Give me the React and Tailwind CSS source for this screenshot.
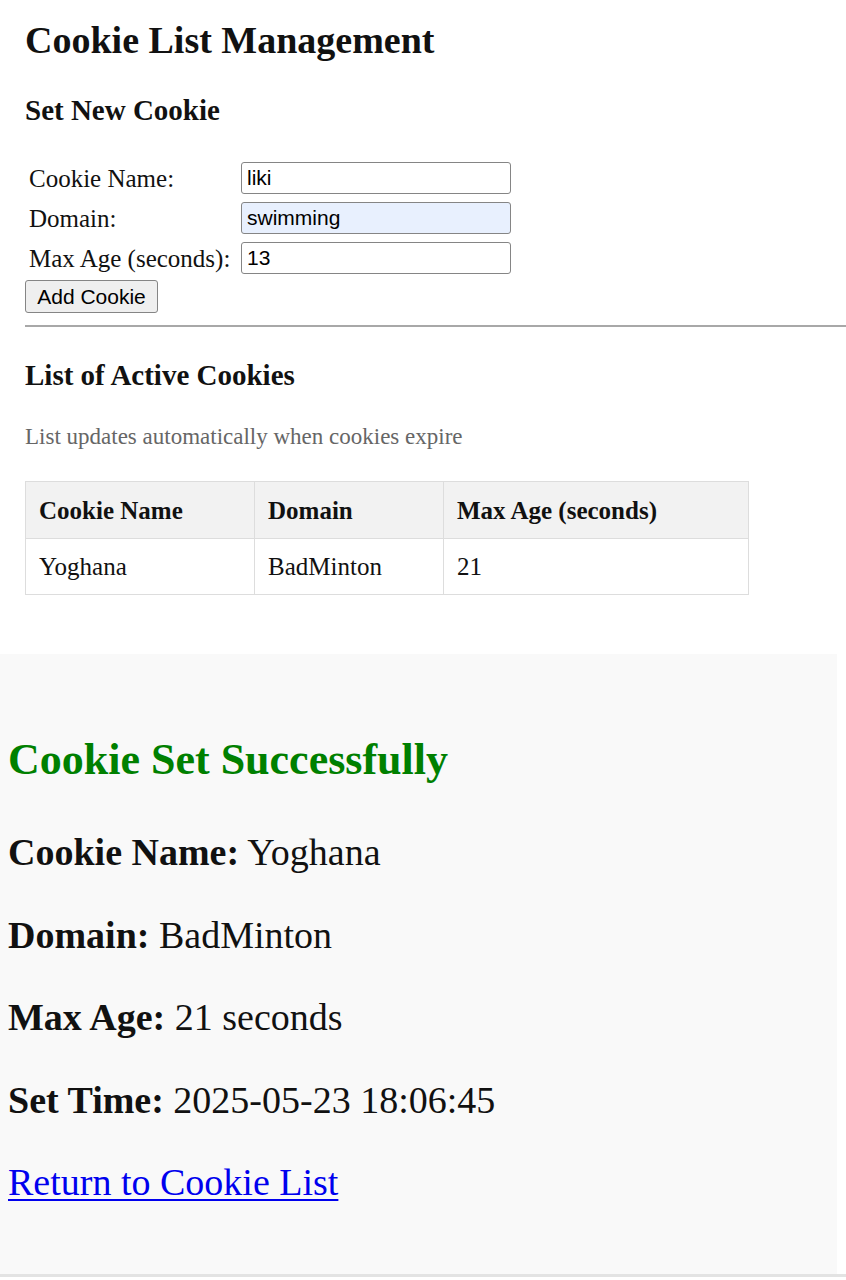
import React, { useState } from "react";

const fields = [
  { label: "Cookie Name:", name: "name", value: "liki" },
  { label: "Domain:", name: "domain", value: "swimming", autofilled: true },
  { label: "Max Age (seconds):", name: "maxAge", value: "13" },
];

const cookies = [{ name: "Yoghana", domain: "BadMinton", maxAge: 21 }];

function CookieForm() {
  const [values, setValues] = useState({ name: "liki", domain: "swimming", maxAge: "13" });

  return (
    <form onSubmit={(e) => e.preventDefault()}>
      <div className="mt-[31px] flex flex-col">
        {fields.map((f) => (
          <div key={f.name} className="flex h-[40px] items-center">
            <label className="w-[216px] pl-[4px] text-[25px] leading-[29px]">{f.label}</label>
            <input
              className={
                "h-[32px] w-[270px] rounded-[3px] border border-[#858585] px-[5px] font-['Liberation_Sans',Arial,sans-serif] text-[21px] text-black outline-none " +
                (f.autofilled ? "bg-[#e8f0fe]" : "bg-white")
              }
              name={f.name}
              value={values[f.name]}
              onChange={(e) => setValues({ ...values, [f.name]: e.target.value })}
            />
          </div>
        ))}
      </div>
      <button
        className="mt-[2px] h-[33px] w-[133px] rounded-[3px] border border-[#858585] bg-[#efefef] font-['Liberation_Sans',Arial,sans-serif] text-[21px] leading-none text-black"
        type="submit"
      >
        Add Cookie
      </button>
    </form>
  );
}

function CookieTable() {
  return (
    <table className="mt-[31px] w-[723px] table-fixed border-collapse text-[25px] leading-[29px]">
      <colgroup>
        <col className="w-[229px]" />
        <col className="w-[189px]" />
        <col className="w-[305px]" />
      </colgroup>
      <thead>
        <tr className="h-[57px] bg-[#f2f2f2]">
          <th className="border border-[#dddddd] px-[13px] text-left font-bold">Cookie Name</th>
          <th className="border border-[#dddddd] px-[13px] text-left font-bold">Domain</th>
          <th className="border border-[#dddddd] px-[13px] text-left font-bold">Max Age (seconds)</th>
        </tr>
      </thead>
      <tbody>
        {cookies.map((c) => (
          <tr key={c.name} className="h-[56px]">
            <td className="border border-[#dddddd] px-[13px]">{c.name}</td>
            <td className="border border-[#dddddd] px-[13px]">{c.domain}</td>
            <td className="border border-[#dddddd] px-[13px]">{c.maxAge}</td>
          </tr>
        ))}
      </tbody>
    </table>
  );
}

function SuccessPanel() {
  const rows = [
    ["Cookie Name:", "Yoghana"],
    ["Domain:", "BadMinton"],
    ["Max Age:", "21 seconds"],
    ["Set Time:", "2025-05-23 18:06:45"],
  ];

  return (
    <div className="h-[620px] w-[837px] bg-[#f9f9f9] pt-[81px] pl-[8px]">
      <h2 className="text-[44px] leading-[50px] font-bold text-[#008000]">Cookie Set Successfully</h2>
      <div className="mt-[45px] flex flex-col gap-[38.5px] text-[38px] leading-[44px]">
        {rows.map(([k, v]) => (
          <p key={k}>
            <strong className="font-bold">{k}</strong> {v}
          </p>
        ))}
        <p>
          <a href="#" className="text-[#0000ee] underline decoration-[2px] underline-offset-[4px]">
            Return to Cookie List
          </a>
        </p>
      </div>
    </div>
  );
}

export default function App() {
  return (
    <div className="min-h-[1280px] bg-white font-['Liberation_Serif','Times_New_Roman',serif] text-[#111]">
      <div className="pl-[25px]">
        <h1 className="pt-[18px] text-[38px] leading-[44px] font-bold">Cookie List Management</h1>
        <h3 className="mt-[31px] text-[29px] leading-[34px] font-bold">Set New Cookie</h3>
        <CookieForm />
        <div className="mt-[12px] h-[2px] bg-[#a8a8a8]" />
        <h3 className="mt-[31px] text-[29px] leading-[34px] font-bold">List of Active Cookies</h3>
        <p className="mt-[31px] text-[23px] leading-[27px] text-[#666]">
          List updates automatically when cookies expire
        </p>
        <CookieTable />
      </div>
      <div className="mt-[59px]">
        <SuccessPanel />
        <div className="h-[3px] bg-[#e3e3e3]" />
      </div>
    </div>
  );
}
